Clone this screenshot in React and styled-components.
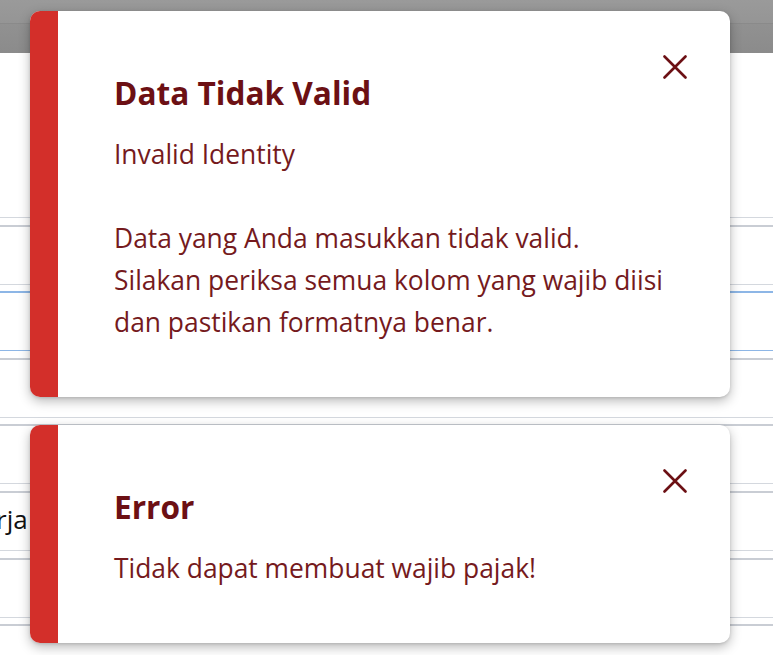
import React from "react";
import styled, { createGlobalStyle } from "styled-components";

const GlobalStyle = createGlobalStyle`
  html, body { margin: 0; padding: 0; background: #ffffff; }
  body { font-family: "Open Sans", "Noto Sans", sans-serif; }
`;

const Page = styled.div`
  position: relative;
  width: 773px;
  height: 655px;
  overflow: hidden;
  background: #ffffff;
`;

const TopBar = styled.div`
  height: 23px;
  background: linear-gradient(#9a9a9a, #959595);
  border-bottom: 1px solid #8a8a8a;
`;

const SubBar = styled.div`
  height: 29px;
  background: linear-gradient(#919191, #8b8b8b);
`;

const FieldList = styled.div`
  display: flex;
  flex-direction: column;
  gap: 6.6px;
  margin-top: 105px;
  margin-left: -4px;
  margin-right: -20px;
`;

const Field = styled.div`
  box-sizing: border-box;
  height: 60px;
  border-top: ${(p) => (p.$open ? "none" : `2px solid ${p.$focused ? "#8db6e6" : "#c9cdd4"}`)};
  border-bottom: 1px solid ${(p) => (p.$focused ? "#8db6e6" : "#d4d8de")};
  display: flex;
  align-items: center;
  font-family: "Open Sans", sans-serif;
  font-size: 26px;
  color: #111;
  padding-top: ${(p) => p.$pad || 0}px;
  padding-bottom: ${(p) => (p.$pad ? 0 : 4)}px;
`;

const Stack = styled.div`
  position: absolute;
  top: 11px;
  left: 30px;
  width: 700px;
  display: flex;
  flex-direction: column;
  gap: 28px;
`;

const Toast = styled.div`
  position: relative;
  display: flex;
  background: #ffffff;
  border-radius: 10px;
  overflow: hidden;
  box-shadow: 0 4px 12px rgba(0, 0, 0, 0.28), 0 1px 3px rgba(0, 0, 0, 0.12);
`;

const Stripe = styled.div`
  flex: 0 0 28px;
  background: #d32f2a;
`;

const Content = styled.div`
  flex: 1;
  padding: 64px 30px 54px 56px;
`;

const Title = styled.div`
  font-family: "Open Sans", sans-serif;
  font-weight: 700;
  font-size: 31.6px;
  line-height: 36px;
  color: #6c1014;
  margin-bottom: 22px;
`;

const Message = styled.div`
  font-family: "Open Sans", sans-serif;
  font-size: 26.4px;
  line-height: 42px;
  color: #751a1d;
  white-space: pre-line;
`;

const Close = styled.button`
  position: absolute;
  top: 44px;
  right: 43px;
  width: 24px;
  height: 24px;
  padding: 0;
  border: none;
  background: transparent;
  color: #6c1014;
  cursor: pointer;
  display: flex;
  align-items: center;
  justify-content: center;
`;

const XIcon = () => (
  <svg width="24" height="24" viewBox="0 0 24 24" fill="none">
    <path
      d="M1.5 1.5 L22.5 22.5 M22.5 1.5 L1.5 22.5"
      stroke="currentColor"
      strokeWidth="2.6"
      strokeLinecap="round"
    />
  </svg>
);

const toasts = [
  {
    title: "Data Tidak Valid",
    message:
      "Invalid Identity\n\nData yang Anda masukkan tidak valid.\nSilakan periksa semua kolom yang wajib diisi\ndan pastikan formatnya benar.",
  },
  { title: "Error", message: "Tidak dapat membuat wajib pajak!" },
];

export default function App() {
  return (
    <Page>
      <GlobalStyle />
      <TopBar />
      <SubBar />
      <FieldList>
        <Field $open />
        <Field />
        <Field $focused />
        <Field />
        <Field />
        <Field>rja</Field>
        <Field />
        <Field $pad={40}>9</Field>
      </FieldList>
      <Stack>
        {toasts.map((t) => (
          <Toast key={t.title}>
            <Stripe />
            <Content>
              <Title>{t.title}</Title>
              <Message>{t.message}</Message>
            </Content>
            <Close aria-label="Tutup">
              <XIcon />
            </Close>
          </Toast>
        ))}
      </Stack>
    </Page>
  );
}
